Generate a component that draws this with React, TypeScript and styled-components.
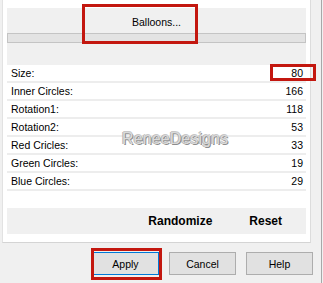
import { FC } from "react";
import styled, { createGlobalStyle } from "styled-components";

const GlobalStyle = createGlobalStyle`
  html, body {
    margin: 0;
    padding: 0;
    background: #f0f0f0;
  }
  body {
    font-family: "Liberation Sans", Arial, sans-serif;
    color: #000;
  }
`;

const Frame = styled.div`
  position: relative;
  width: 322px;
  height: 283px;
  background: #f0f0f0;
  border-right: 1px solid #a8a8a8;
  box-sizing: border-box;
  overflow: hidden;
`;

const Panel = styled.div`
  margin-left: 2px;
  width: 309px;
  height: 243px;
  box-sizing: border-box;
  background: #fff;
  border-left: 1px solid #e2e2e2;
  border-right: 1px solid #dcdcdc;
  border-bottom: 1px solid #d4d4d4;
  padding: 8px 4px 0 4px;
  display: flex;
  flex-direction: column;
`;

const PreviewBand = styled.div`
  position: relative;
  height: 57px;
  background: #f0f0f0;
  display: flex;
  flex-direction: column;
`;

const PresetLabel = styled.div`
  height: 25px;
  display: flex;
  align-items: center;
  justify-content: center;
  font-size: 10.5px;
  padding-top: 3px;
  box-sizing: border-box;
`;

const PreviewStrip = styled.div`
  height: 10px;
  box-sizing: border-box;
  background: #e3e3e3;
  border: 1px solid #c4c4c4;
`;

const Highlight = styled.div<{ $left: number; $top: number; $w: number; $h: number }>`
  position: absolute;
  left: ${(p) => p.$left}px;
  top: ${(p) => p.$top}px;
  width: ${(p) => p.$w}px;
  height: ${(p) => p.$h}px;
  box-sizing: border-box;
  border: 3px solid #c3170f;
  pointer-events: none;
  z-index: 2;
`;

const List = styled.div`
  position: relative;
  display: flex;
  flex-direction: column;
`;

const Row = styled.div`
  position: relative;
  height: 18px;
  box-sizing: border-box;
  border-bottom: 2px solid #ededed;
  display: flex;
  align-items: center;
  justify-content: space-between;
  padding: 0 3px 0 4px;
  font-size: 10.5px;
`;

const Watermark = styled.div`
  position: absolute;
  left: 115px;
  top: 65px;
  font-size: 16px;
  letter-spacing: 0.1px;
  color: #dadada;
  text-shadow: 1px 1px 0 #8c8c8c, -1px 0 0 #b4b4b4, 0 -1px 0 #c8c8c8;
  pointer-events: none;
`;

const ActionBand = styled.div`
  margin-top: 17px;
  height: 26px;
  background: #f0f0f0;
  display: flex;
  align-items: center;
  justify-content: flex-end;
  gap: 37px;
  padding-right: 24px;
  font-size: 12px;
  font-weight: bold;
`;

const ButtonRow = styled.div`
  display: flex;
  justify-content: flex-end;
  gap: 10px;
  padding: 9px 8px 0 0;
`;

const Button = styled.div<{ $default?: boolean }>`
  position: relative;
  width: 67px;
  height: 23px;
  box-sizing: border-box;
  background: #e1e1e1;
  border: 1px solid ${(p) => (p.$default ? "#0078d7" : "#adadad")};
  display: flex;
  align-items: center;
  justify-content: center;
  font-size: 10.5px;
`;

const rows: [string, number][] = [
  ["Size:", 80],
  ["Inner Circles:", 166],
  ["Rotation1:", 118],
  ["Rotation2:", 53],
  ["Red Cricles:", 33],
  ["Green Circles:", 19],
  ["Blue Circles:", 29],
];

const App: FC = () => {
  return (
    <Frame>
      <GlobalStyle />
      <Panel>
        <PreviewBand>
          <PresetLabel>Balloons...</PresetLabel>
          <PreviewStrip />
          <Highlight $left={75} $top={-4} $w={116} $h={40} />
        </PreviewBand>
        <List>
          {rows.map(([label, value], i) => (
            <Row key={label}>
              <span>{label}</span>
              <span>{value}</span>
              {i === 0 && <Highlight $left={263} $top={-1} $w={46} $h={17} />}
            </Row>
          ))}
          <Watermark>ReneeDesigns</Watermark>
        </List>
        <ActionBand>
          <span>Randomize</span>
          <span>Reset</span>
        </ActionBand>
      </Panel>
      <ButtonRow>
        <Button $default>
          Apply
          <Highlight $left={-2} $top={-5} $w={71} $h={32} />
        </Button>
        <Button>Cancel</Button>
        <Button>Help</Button>
      </ButtonRow>
    </Frame>
  );
};

export default App;
